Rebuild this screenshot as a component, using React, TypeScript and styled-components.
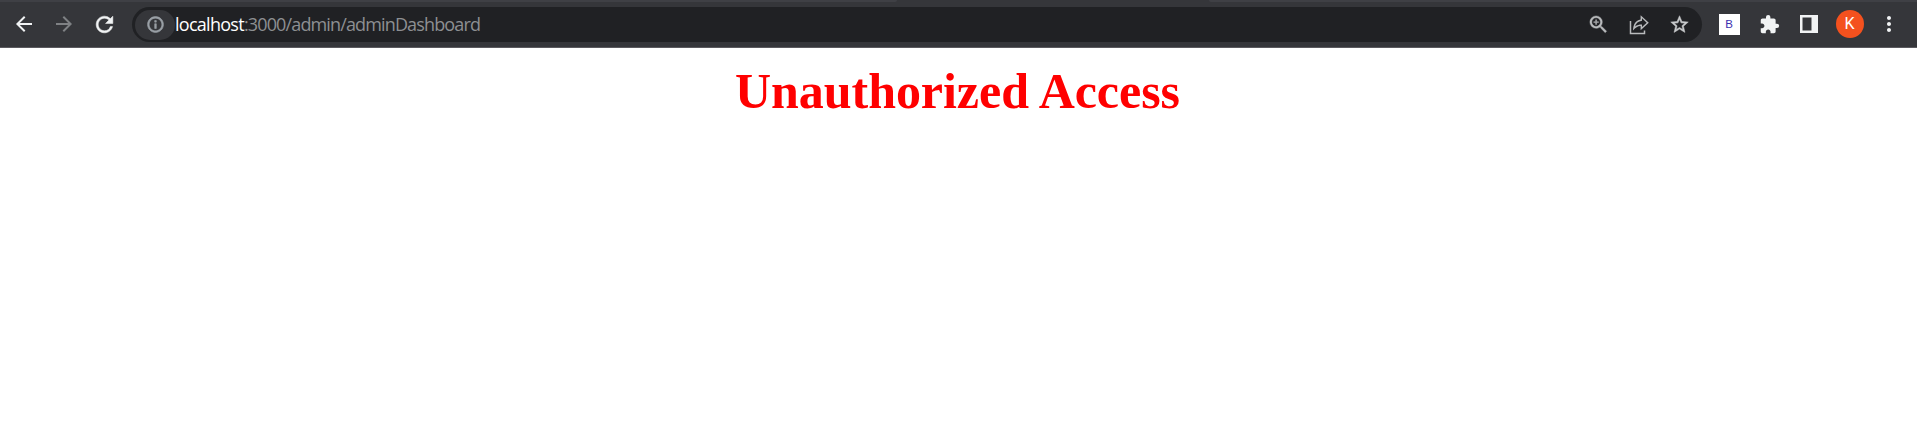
import React from 'react';
import styled, { createGlobalStyle } from 'styled-components';
import {
  MdArrowBack,
  MdArrowForward,
  MdRefresh,
  MdInfoOutline,
  MdZoomIn,
  MdStarBorder,
  MdExtension,
  MdMoreVert,
} from 'react-icons/md';

const GlobalStyle = createGlobalStyle`
  body { margin: 0; background: #fff; }
  * { box-sizing: border-box; }
`;

const Browser = styled.div`
  height: 422px;
  display: flex;
  flex-direction: column;
  overflow: hidden;
`;

const TabEdge = styled.div`
  height: 2px;
  flex: none;
  display: flex;
  justify-content: space-between;
  background: #35363a;
`;

const TabEdgePart = styled.div<{ $width: number; $side: 'left' | 'right' }>`
  width: ${(p) => p.$width}px;
  background: #3f4045;
  border-bottom-${(p) => (p.$side === 'left' ? 'right' : 'left')}-radius: 2px;
`;

const Toolbar = styled.header`
  height: 46px;
  flex: none;
  display: flex;
  align-items: center;
  padding-bottom: 1px;
  background: #35363a;
  border-bottom: 1px solid #5b5a5f;
`;

const IconButton = styled.button<{ $width: number; $color?: string; $weight?: number }>`
  width: ${(p) => p.$width}px;
  height: 34px;
  flex: none;
  display: flex;
  align-items: center;
  justify-content: center;
  padding: 0;
  border: 0;
  background: none;
  color: ${(p) => p.$color ?? '#f1f3f4'};

  > svg {
    stroke-width: ${(p) => p.$weight ?? 0};
  }

  path[fill='none'] {
    stroke: none;
  }
`;

const Navigation = styled.nav`
  display: flex;
  width: 132px;
  padding-left: 4px;
`;

const AddressBar = styled.div`
  width: 1570px;
  height: 35px;
  margin-top: 1px;
  flex: none;
  display: flex;
  align-items: center;
  padding: 0 2px 0 3px;
  border-radius: 18px;
  background: #202124;
`;

const SiteInfo = styled.span`
  width: 40px;
  height: 30px;
  flex: none;
  display: flex;
  align-items: center;
  justify-content: center;
  border-radius: 15px;
  background: #35363a;
  color: #9aa0a6;

  > svg {
    stroke-width: 0.8;
  }

  path[fill='none'] {
    stroke: none;
  }
`;

const Url = styled.span`
  flex: 1;
  padding-bottom: 1px;
  font: 18px/24px 'Open Sans', 'Noto Sans', sans-serif;
  letter-spacing: -0.86px;
  white-space: nowrap;
  color: #8d8f92;
`;

const Host = styled.span`
  letter-spacing: -0.72px;
  color: #fff;
`;

const Extensions = styled.div`
  display: flex;
  align-items: center;
  padding-left: 7px;
`;

const ExtensionBadge = styled.span`
  width: 21px;
  height: 21px;
  display: flex;
  align-items: center;
  justify-content: center;
  background: #fff;
  color: #3c2fb0;
  font: 11.5px/21px 'Liberation Sans', sans-serif;
`;

const Avatar = styled.span`
  width: 28px;
  height: 28px;
  display: flex;
  align-items: center;
  justify-content: center;
  border-radius: 50%;
  background: #f4511e;
  color: #fff;
  font: 16px/28px Roboto, sans-serif;
`;

const Page = styled.main`
  flex: 1;
  padding: 14px 2px 0 0;
  background: #fff;
`;

const Title = styled.h1`
  margin: 0;
  font: bold 50px/58px 'Liberation Serif', serif;
  letter-spacing: -0.04px;
  text-align: center;
  color: #f00;
`;

const ShareIcon = () => (
  <svg width="20" height="20" viewBox="0 0 20 20" fill="none">
    <g stroke="currentColor">
      <polyline points="1.5,6 1.5,18.5 15.5,18.5 15.5,15.5" />
      <polygon points="0,0" />
    </g>
    <path
      fill="currentColor"
      fillRule="evenodd"
      d="M11.6.2 19.8 7.7l-8.2 7.6v-4.2c-3 .1-5 1.400-7.6 4.500C4.200 9.300 6.600 5.300 11.600 4.500zM13 3.300v2.500C9.200 6.300 7 8.300 6 11.600c2-1.400 4-2 7-2v2.500l4.700-4.400z"
    />
  </svg>
);

const SidePanelIcon = () => (
  <svg width="18" height="18" viewBox="0 0 18 18">
    <path fill="currentColor" fillRule="evenodd" d="M0 0h18v18H0zM2.5 2.5v13h9v-13z" />
  </svg>
);

export default function App() {
  return (
    <Browser>
      <GlobalStyle />
      <TabEdge>
        <TabEdgePart $width={897} $side="left" />
        <TabEdgePart $width={708} $side="right" />
      </TabEdge>
      <Toolbar>
        <Navigation>
          <IconButton $width={40} aria-label="Back"><MdArrowBack size={24} /></IconButton>
          <IconButton $width={40} $color="#7f8184" aria-label="Forward"><MdArrowForward size={24} /></IconButton>
          <IconButton $width={41} $weight={0.5} aria-label="Reload"><MdRefresh size={25} /></IconButton>
        </Navigation>
        <AddressBar>
          <SiteInfo><MdInfoOutline size={19} /></SiteInfo>
          <Url><Host>localhost</Host>:3000/admin/adminDashboard</Url>
          <IconButton $width={41} $color="#b9bbbd" $weight={0.4} aria-label="Zoom"><MdZoomIn size={23} /></IconButton>
          <IconButton $width={40} $color="#b9bbbd" $weight={1.5} aria-label="Share"><ShareIcon /></IconButton>
          <IconButton $width={41} $color="#c8cacc" $weight={0.6} aria-label="Bookmark"><MdStarBorder size={21} /></IconButton>
        </AddressBar>
        <Extensions>
          <IconButton $width={40} aria-label="Extension"><ExtensionBadge>B</ExtensionBadge></IconButton>
          <IconButton $width={40} aria-label="Extensions"><MdExtension size={21} /></IconButton>
          <IconButton $width={40} aria-label="Side panel"><SidePanelIcon /></IconButton>
          <IconButton $width={41} aria-label="Profile"><Avatar>K</Avatar></IconButton>
          <IconButton $width={38} aria-label="Menu"><MdMoreVert size={24} /></IconButton>
        </Extensions>
      </Toolbar>
      <Page>
        <Title>Unauthorized Access</Title>
      </Page>
    </Browser>
  );
}
